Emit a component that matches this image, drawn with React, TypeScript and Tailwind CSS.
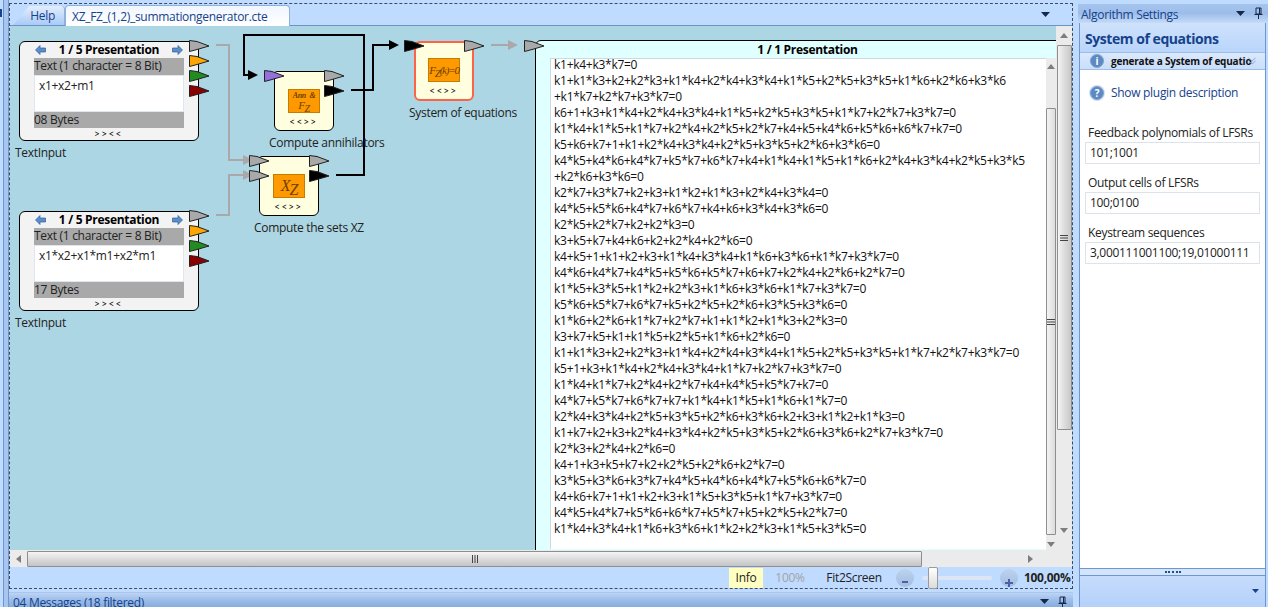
import React from "react";

const FONT = "[font-family:'Open_Sans','Noto_Sans',sans-serif] tracking-[-0.3px]";

const lines = [
  "k1+k4+k3*k7=0",
  "k1+k1*k3+k2+k2*k3+k1*k4+k2*k4+k3*k4+k1*k5+k2*k5+k3*k5+k1*k6+k2*k6+k3*k6",
  "+k1*k7+k2*k7+k3*k7=0",
  "k6+1+k3+k1*k4+k2*k4+k3*k4+k1*k5+k2*k5+k3*k5+k1*k7+k2*k7+k3*k7=0",
  "k1*k4+k1*k5+k1*k7+k2*k4+k2*k5+k2*k7+k4+k5+k4*k6+k5*k6+k6*k7+k7=0",
  "k5+k6+k7+1+k1+k2*k4+k3*k4+k2*k5+k3*k5+k2*k6+k3*k6=0",
  "k4*k5+k4*k6+k4*k7+k5*k7+k6*k7+k4+k1*k4+k1*k5+k1*k6+k2*k4+k3*k4+k2*k5+k3*k5",
  "+k2*k6+k3*k6=0",
  "k2*k7+k3*k7+k2+k3+k1*k2+k1*k3+k2*k4+k3*k4=0",
  "k4*k5+k5*k6+k4*k7+k6*k7+k4+k6+k3*k4+k3*k6=0",
  "k2*k5+k2*k7+k2+k2*k3=0",
  "k3+k5+k7+k4+k6+k2+k2*k4+k2*k6=0",
  "k4+k5+1+k1+k2+k3+k1*k4+k3*k4+k1*k6+k3*k6+k1*k7+k3*k7=0",
  "k4*k6+k4*k7+k4*k5+k5*k6+k5*k7+k6+k7+k2*k4+k2*k6+k2*k7=0",
  "k1*k5+k3*k5+k1*k2+k2*k3+k1*k6+k3*k6+k1*k7+k3*k7=0",
  "k5*k6+k5*k7+k6*k7+k5+k2*k5+k2*k6+k3*k5+k3*k6=0",
  "k1*k6+k2*k6+k1*k7+k2*k7+k1+k1*k2+k1*k3+k2*k3=0",
  "k3+k7+k5+k1+k1*k5+k2*k5+k1*k6+k2*k6=0",
  "k1+k1*k3+k2+k2*k3+k1*k4+k2*k4+k3*k4+k1*k5+k2*k5+k3*k5+k1*k7+k2*k7+k3*k7=0",
  "k5+1+k3+k1*k4+k2*k4+k3*k4+k1*k7+k2*k7+k3*k7=0",
  "k1*k4+k1*k7+k2*k4+k2*k7+k4+k4*k5+k5*k7+k7=0",
  "k4*k7+k5*k7+k6*k7+k7+k1*k4+k1*k5+k1*k6+k1*k7=0",
  "k2*k4+k3*k4+k2*k5+k3*k5+k2*k6+k3*k6+k2+k3+k1*k2+k1*k3=0",
  "k1+k7+k2+k3+k2*k4+k3*k4+k2*k5+k3*k5+k2*k6+k3*k6+k2*k7+k3*k7=0",
  "k2*k3+k2*k4+k2*k6=0",
  "k4+1+k3+k5+k7+k2+k2*k5+k2*k6+k2*k7=0",
  "k3*k5+k3*k6+k3*k7+k4*k5+k4*k6+k4*k7+k5*k6+k6*k7=0",
  "k4+k6+k7+1+k1+k2+k3+k1*k5+k3*k5+k1*k7+k3*k7=0",
  "k4*k5+k4*k7+k5*k6+k6*k7+k5*k7+k5+k2*k5+k2*k7=0",
  "k1*k4+k3*k4+k1*k6+k3*k6+k1*k2+k2*k3+k1*k5+k3*k5=0",
];

function Pennant({ color, className }: { color: string; className: string }) {
  return (
    <svg width="21" height="12" viewBox="0 0 21 12" className={"absolute " + className}>
      <polygon points="0.5,0.5 8,1.5 20,6 8,9.5 0.5,11.5" fill={color} stroke="#222" strokeWidth="1" />
    </svg>
  );
}

function Arrow({ dir }: { dir: "l" | "r" }) {
  return (
    <svg width="11" height="10" viewBox="0 0 11 10" className={dir === "l" ? "" : "-scale-x-100"}>
      <polygon points="0.5,5 5,0.5 5,3 10.5,3 10.5,7 5,7 5,9.5" fill="#5b8ec9" stroke="#2f5f9e" strokeWidth="0.7" />
    </svg>
  );
}

function TextNode({ text, size, className }: { text: string; size: string; className: string }) {
  return (
    <div className={"absolute w-[180px] h-[100px] rounded-[6px] border border-black bg-[#f3f3f3] flex flex-col items-center " + className}>
      <div className="w-[150px] h-[16px] flex items-center justify-between px-[1px]">
        <Arrow dir="l" />
        <span className="text-[12px] font-bold text-black leading-[16px]">1 / 5 Presentation</span>
        <Arrow dir="r" />
      </div>
      <div className="w-[150px] h-[17px] bg-[#a9a9a9] text-[12px] leading-[16px] text-[#222]">Text (1 character = 8 Bit)</div>
      <div className="w-[150px] h-[38px] bg-white border border-[#dfe6ee] px-[4px] text-[12px] leading-[20px] text-[#222]">{text}</div>
      <div className="w-[150px] h-[16px] bg-[#a9a9a9] text-[12px] leading-[16px] text-[#222]">{size}</div>
      <div className="h-[12px] text-[8px] leading-[12px] tracking-[2.5px] text-black font-semibold">{">><<"}</div>
    </div>
  );
}

function OpIcon({ children, className }: { children: React.ReactNode; className?: string }) {
  return (
    <div className={"w-[32px] h-[24px] border border-[#c67c00] bg-[#ff9900] text-[#6e4200] [font-family:'Liberation_Serif',serif] italic flex flex-col items-center justify-center " + (className ?? "mt-[17px]")}>
      {children}
    </div>
  );
}

function OpNode({ children, className }: { children: React.ReactNode; className: string }) {
  return (
    <div className={"absolute w-[60px] h-[60px] bg-[#ffffe0] flex flex-col items-center " + className}>
      {children}
      <div className="mt-[3px] text-[8px] leading-[12px] tracking-[2.5px] text-black font-semibold">{"<<>>"}</div>
    </div>
  );
}

function Label({ children, className }: { children: React.ReactNode; className: string }) {
  return <div className={"absolute text-[12px] leading-[16px] text-[#222] whitespace-nowrap " + className}>{children}</div>;
}

function Grip({ vertical }: { vertical?: boolean }) {
  return vertical ? (
    <svg width="8" height="8" viewBox="0 0 8 8">
      <path d="M0 1.5H8M0 4H8M0 6.5H8" stroke="#444" strokeWidth="1" />
    </svg>
  ) : (
    <svg width="8" height="8" viewBox="0 0 8 8">
      <path d="M1.5 0V8M4 0V8M6.5 0V8" stroke="#444" strokeWidth="1" />
    </svg>
  );
}

function Tri({ d }: { d: "u" | "d" | "l" | "r" }) {
  const p = { u: "0,6 4,1 8,6", d: "0,2 8,2 4,7", l: "6,0 6,8 1,4", r: "2,0 2,8 7,4" }[d];
  return (
    <svg width="8" height="8" viewBox="0 0 8 8">
      <polygon points={p} fill="#7d7d7d" />
    </svg>
  );
}

function Pin() {
  return (
    <svg width="9" height="12" viewBox="0 0 9 12">
      <path d="M2 1H7V7H2ZM0.5 7.5H8.5M4.5 8V12M5.5 1V7" stroke="#15284b" fill="none" strokeWidth="1" />
    </svg>
  );
}

function Drop() {
  return (
    <svg width="9" height="5" viewBox="0 0 9 5">
      <polygon points="0,0 9,0 4.5,5" fill="#15284b" />
    </svg>
  );
}

function Orb({ ch }: { ch: string }) {
  return (
    <div className="w-[14px] h-[14px] shrink-0 rounded-full border border-[#7ea3d3] bg-[#5c89c2] text-white text-[10px] font-bold leading-[12px] text-center shadow-[0_0_0_1px_#cfe0f5]">
      {ch}
    </div>
  );
}

function Field({ label, value, mt }: { label: string; value: string; mt: string }) {
  return (
    <div className={"flex flex-col " + mt}>
      <div className="ml-[8px] h-[17px] text-[12px] leading-[16px] text-[#222] whitespace-nowrap">{label}</div>
      <div className="ml-[5px] w-[175px] h-[22px] bg-white border border-[#dde3ea] pl-[4px] text-[12px] leading-[20px] text-[#222] whitespace-nowrap">
        {value}
      </div>
    </div>
  );
}

export default function App() {
  return (
    <div className={"w-[1268px] h-[607px] overflow-hidden bg-[#bfdbff] flex " + FONT}>
      {/* left collapsed strip */}
      <div className="w-[9px] h-full shrink-0 flex">
        <div className="w-[3px] h-full bg-[#bfdbff] pt-[9px]">
          <div className="w-[2px] h-[8px] bg-[#15428b]" />
        </div>
        <div className="w-[1px] h-full bg-[#6f97cf]" />
        <div className="w-[4px] h-full bg-[#a7c5ee]" />
        <div className="w-[1px] h-full bg-[#6f97cf]" />
      </div>

      {/* main document column */}
      <div className="w-[1064px] shrink-0 flex flex-col">
        <div className="h-[3px]" />
        <div className="h-[586px] border-t border-b border-l border-r border-dashed border-[#3f4a5c] flex flex-col">
          {/* tabs */}
          <div className="h-[22px] shrink-0 flex items-end border-b border-[#6a93cc] pl-[3px] relative">
            <div className="w-[52px] h-[19px] rounded-tr-[4px] [clip-path:polygon(0_100%,16px_0,100%_0,100%_100%)] bg-gradient-to-b from-[#e3eefd] to-[#a9caf6] border-r border-[#8fb0dd] text-[12px] leading-[19px] text-[#15428b] text-right pr-[9px]">Help</div>
            <div className="w-[225px] h-[21px] -mb-[1px] rounded-t-[4px] bg-gradient-to-b from-[#f0f6ff] to-white border border-b-0 border-[#8fb0dd] text-[12px] leading-[21px] text-[#15428b] pl-[6px] whitespace-nowrap">XZ_FZ_(1,2)_summationgenerator.cte</div>
            <div className="absolute right-[22px] top-[8px] flex"><Drop /></div>
          </div>

          {/* canvas + vertical bar */}
          <div className="h-[524px] shrink-0 flex">
            <div className="relative w-[1046px] h-full bg-[#add6e4] overflow-hidden">
              {/* wires */}
              <svg width="1046" height="524" className="absolute left-0 top-0" viewBox="0 0 1046 524" fill="none">
                <path d="M206 19H219V134H233" stroke="#a9a9a9" strokeWidth="2" />
                <polygon points="233,129 243,134 233,139" fill="#a9a9a9" />
                <path d="M206 189H219V149H233" stroke="#a9a9a9" strokeWidth="2" />
                <polygon points="233,144 243,149 233,154" fill="#a9a9a9" />
                <path d="M481 19H498" stroke="#a9a9a9" strokeWidth="2" />
                <polygon points="498,14 508,19 498,24" fill="#a9a9a9" />
                <path d="M326 149H354V9H234V49H240" stroke="#000" strokeWidth="2" />
                <polygon points="238,44 248,49 238,54" fill="#000" />
                <path d="M341 64H363V19H380" stroke="#000" strokeWidth="2" />
                <polygon points="379,14 389,19 379,24" fill="#000" />
              </svg>

              <TextNode text="x1+x2+m1" size="08 Bytes" className="left-[9px] top-[15px]" />
              <Pennant color="#a9a9a9" className="left-[179px] top-[14px]" />
              <Pennant color="#ffa500" className="left-[179px] top-[29px]" />
              <Pennant color="#228b22" className="left-[179px] top-[44px]" />
              <Pennant color="#8b0000" className="left-[179px] top-[59px]" />
              <Label className="left-[5px] top-[119px]">TextInput</Label>

              <TextNode text="x1*x2+x1*m1+x2*m1" size="17 Bytes" className="left-[9px] top-[185px]" />
              <Pennant color="#a9a9a9" className="left-[179px] top-[184px]" />
              <Pennant color="#ffa500" className="left-[179px] top-[199px]" />
              <Pennant color="#228b22" className="left-[179px] top-[214px]" />
              <Pennant color="#8b0000" className="left-[179px] top-[229px]" />
              <Label className="left-[5px] top-[289px]">TextInput</Label>

              {/* annihilators */}
              <OpNode className="left-[264px] top-[45px] rounded-b-[6px] rounded-t-[3px] border border-black">
                <OpIcon>
                  <span className="text-[8px] leading-[9px] font-bold whitespace-nowrap">Ann &nbsp;&amp;</span>
                  <span className="text-[11px] leading-[11px]">F<sub className="text-[10px]">Z</sub></span>
                </OpIcon>
              </OpNode>
              <Pennant color="#9370db" className="left-[254px] top-[44px]" />
              <Pennant color="#a9a9a9" className="left-[314px] top-[44px]" />
              <Pennant color="#000" className="left-[314px] top-[59px]" />
              <Label className="left-[259px] top-[109px]">Compute annihilators</Label>

              {/* sets XZ */}
              <OpNode className="left-[249px] top-[130px] rounded-b-[6px] rounded-t-[3px] border border-black">
                <OpIcon>
                  <span className="text-[16px] leading-[14px] whitespace-nowrap tracking-[-1px]">X<sub className="text-[16px]">Z</sub></span>
                </OpIcon>
              </OpNode>
              <Pennant color="#a9a9a9" className="left-[239px] top-[129px]" />
              <Pennant color="#a9a9a9" className="left-[239px] top-[144px]" />
              <Pennant color="#a9a9a9" className="left-[299px] top-[129px]" />
              <Pennant color="#000" className="left-[299px] top-[144px]" />
              <Label className="left-[244px] top-[194px]">Compute the sets XZ</Label>

              {/* system of equations */}
              <OpNode className="left-[404px] top-[15px] rounded-[6px] border-2 border-[#ff6347]">
                <OpIcon className="mt-[15px]">
                  <span className="text-[11px] leading-[14px] whitespace-nowrap tracking-[-1.2px]">F<sub className="text-[11px]">Z</sub>(k)=0</span>
                </OpIcon>
              </OpNode>
              <Pennant color="#000" className="left-[394px] top-[14px]" />
              <Pennant color="#a9a9a9" className="left-[454px] top-[14px]" />
              <Label className="left-[399px] top-[79px]">System of equations</Label>

              {/* presentation */}
              <div className="absolute left-[525px] top-[14px] w-[530px] h-[520px] rounded-tl-[6px] border border-black bg-[#e0ffff] flex flex-col">
                <div className="w-[543px] h-[17px] shrink-0 flex">
                  <div className="w-full text-center text-[12px] font-bold leading-[18px] text-black">1 / 1 Presentation</div>
                </div>
                <div className="flex-1 flex pl-[14px]">
                  <div className="w-[497px] h-[491px] bg-white border-t border-l border-[#cfd8e0] pl-[3px] flex">
                    <div className="w-[482px] -mt-[2px] text-[12px] leading-[16px] text-[#111] whitespace-nowrap tracking-[-0.27px]">
                      {lines.map((l, i) => (
                        <div key={i} className="h-[16px]">{l}</div>
                      ))}
                    </div>
                  </div>
                </div>
              </div>
              <Pennant color="#a9a9a9" className="left-[514px] top-[14px]" />

              {/* inner scrollbar */}
              <div className="absolute left-[1036px] top-[32px] w-[10px] h-[492px] bg-[#ebebeb] flex flex-col items-center">
                <div className="h-[18px] flex items-center"><Tri d="u" /></div>
                <div className="mt-[32px] w-full h-[427px] border border-[#8e8e8e] bg-gradient-to-r from-[#f4f4f4] to-[#dcdcdc] rounded-[1px] flex items-center justify-center"><Grip vertical /></div>
                <div className="mt-[5px]"><Tri d="d" /></div>
              </div>
            </div>
            <div className="w-[16px] h-full bg-[#ebebeb] flex flex-col items-center">
              <div className="h-[19px] flex items-center"><Tri d="u" /></div>
              <div className="w-[15px] h-[385px] border border-[#8e8e8e] bg-gradient-to-r from-[#f4f4f4] via-[#dcdcdc] to-[#c8c8c8] rounded-[1px] flex items-center justify-center"><Grip vertical /></div>
              <div className="mt-[96px]"><Tri d="d" /></div>
            </div>
          </div>

          {/* horizontal bar */}
          <div className="h-[17px] shrink-0 bg-[#ebebeb] flex items-center">
            <div className="w-[17px] flex justify-center"><Tri d="l" /></div>
            <div className="w-[895px] h-[16px] border border-[#8e8e8e] rounded-[1px] bg-gradient-to-b from-[#f4f4f4] via-[#dcdcdc] to-[#c4c4c4] flex items-center justify-center"><Grip /></div>
            <div className="w-[122px] flex justify-end pr-[10px]"><Tri d="r" /></div>
          </div>

          {/* status */}
          <div className="flex-1 flex items-center text-[12px] text-[#222] relative">
            <div className="ml-[719px] w-[34px] h-[20px] bg-[#ffffc2] text-center leading-[20px]">Info</div>
            <div className="ml-[11px] w-[32px] text-center text-[#a3a3a3]">100%</div>
            <div className="ml-[20px] w-[56px] text-center whitespace-nowrap">Fit2Screen</div>
            <div className="ml-[14px] w-[18px] h-[18px] rounded-full bg-gradient-to-b from-[#bcd2ee] to-[#a4bde0] flex items-end justify-center">
              <div className="w-[6px] h-[2px] bg-[#4a5fa8] mb-[4px]" />
            </div>
            <div className="ml-[8px] w-[70px] h-[4px] bg-[#dbe5f3] rounded-full relative">
              <div className="absolute left-[6px] -top-[9px] w-[10px] h-[22px] border border-[#9a9a9a] rounded-[2px] bg-gradient-to-b from-white to-[#dcdcdc]" />
            </div>
            <div className="ml-[8px] w-[18px] h-[18px] rounded-full bg-gradient-to-b from-[#bcd2ee] to-[#a4bde0] flex items-end justify-center relative">
              <div className="w-[8px] h-[2px] bg-[#4a5fa8] mb-[3px]" />
              <div className="absolute bottom-[0px] left-[8px] w-[2px] h-[8px] bg-[#4a5fa8]" />
            </div>
            <div className="ml-[6px] font-bold whitespace-nowrap">100,00%</div>
          </div>
        </div>

        {/* messages */}
        <div className="mt-[3px] h-[15px] bg-gradient-to-b from-[#bcd4f5] via-[#9dbde8] to-[#85ace2] border-t border-[#a9c6ef] flex items-start pl-[4px] text-[12px] leading-[20px] text-[#15428b] relative">
          04 Messages (18 filtered)
          <div className="absolute left-[1031px] top-[6px]"><Drop /></div>
          <div className="absolute left-[1049px] top-[3px]"><Pin /></div>
        </div>
      </div>

      <div className="w-[5px] shrink-0" />

      {/* right panel */}
      <div className="w-[190px] shrink-0 flex flex-col pt-[4px]">
        <div className="h-[19px] shrink-0 bg-gradient-to-b from-[#a5c4ee] via-[#9dbde9] to-[#c5dbf8] flex items-center pl-[3px] pt-[2px] text-[12px] text-[#15428b] relative">
          Algorithm Settings
          <div className="absolute right-[23px] top-[7px]"><Drop /></div>
          <div className="absolute right-[5px] top-[3px]"><Pin /></div>
        </div>
        <div className="flex-1 ml-[1px] w-[187px] border-l border-r border-[#6f97cf] flex flex-col">
          <div className="h-[29px] shrink-0 bg-gradient-to-b from-[#cfe2fb] to-[#b9d5fb] pl-[5px] text-[14px] font-bold leading-[32px] tracking-[-0.45px] text-[#15428b] whitespace-nowrap">System of equations</div>
          <div className="h-[18px] shrink-0 border-t border-b border-[#9dbde9] bg-gradient-to-b from-[#dbe9fc] to-[#c9defb] flex items-center pl-[10px] relative">
            <Orb ch="i" />
            <div className="ml-[7px] w-[138px] text-[10px] font-bold text-[#111] whitespace-nowrap tracking-[-0.2px]">generate a System of equatio</div>
            <svg width="8" height="8" viewBox="0 0 8 8" fill="none" className="ml-[-1px]"><path d="M0.5 1L4 4L7.5 1M0.5 4L4 7L7.5 4" stroke="#8ea7c6" /></svg>
          </div>
          <div className="flex-1 bg-white flex flex-col">
            <div className="flex items-center mt-[14px] ml-[10px]">
              <Orb ch="?" />
              <div className="ml-[7px] text-[12px] text-[#15428b] whitespace-nowrap">Show plugin description</div>
            </div>
            <Field label="Feedback polynomials of LFSRs" value="101;1001" mt="mt-[23px]" />
            <Field label="Output cells of LFSRs" value="100;0100" mt="mt-[11px]" />
            <Field label="Keystream sequences" value="3,000111001100;19,01000111" mt="mt-[11px]" />
          </div>
          <div className="h-[8px] shrink-0 border-t border-b border-[#6f97cf] bg-[#d3e4fb] flex items-center justify-center">
            <div className="w-[16px] h-[2px] border-t-2 border-dotted border-[#1d4f91]" />
          </div>
          <div className="h-[31px] shrink-0 bg-gradient-to-b from-[#c6dcfb] to-[#b4d1fb] relative">
            <div className="absolute right-[6px] top-[13px]"><svg width="7" height="4" viewBox="0 0 7 4"><polygon points="0,0 7,0 3.5,4" fill="#15428b" /></svg></div>
          </div>
        </div>
      </div>
    </div>
  );
}
